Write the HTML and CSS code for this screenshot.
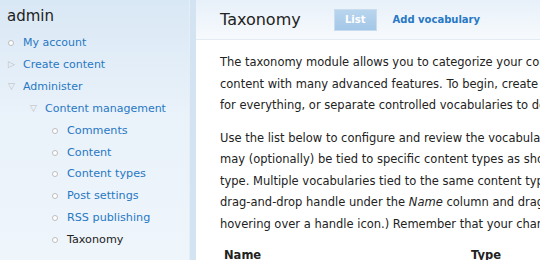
FILE: index.html
```html
<!DOCTYPE html>
<html lang="en">
<head>
  <meta charset="UTF-8">
  <title>Taxonomy | admin</title>
  <link rel="stylesheet" href="styles.css">
</head>
<body>

<div class="page">

  <!-- sidebar navigation -->
  <div class="sidebar">
    <h2>admin</h2>
    <ul class="menu">
      <li class="leaf"><a href="#">My account</a></li>
      <li class="collapsed"><a href="#">Create content</a></li>
      <li class="expanded"><a href="#">Administer</a>
        <ul class="menu">
          <li class="expanded"><a href="#">Content management</a>
            <ul class="menu">
              <li class="leaf"><a href="#">Comments</a></li>
              <li class="leaf"><a href="#">Content</a></li>
              <li class="leaf"><a href="#">Content types</a></li>
              <li class="leaf"><a href="#">Post settings</a></li>
              <li class="leaf"><a href="#">RSS publishing</a></li>
              <li class="leaf"><a href="#" class="active">Taxonomy</a></li>
            </ul>
          </li>
        </ul>
      </li>
    </ul>
  </div>

  <!-- main content -->
  <div class="main">
    <div class="titlebar">
      <h1>Taxonomy</h1>
      <ul class="tabs">
        <li class="on"><a href="#">List</a></li>
        <li><a href="#">Add vocabulary</a></li>
      </ul>
    </div>

    <div class="content">
      <p>The taxonomy module allows you to categorize your content using both tags and administrator defined terms. It is a flexible tool for classifying<br>
      content with many advanced features. To begin, create a 'Vocabulary' to hold one set of terms or tags. You can create one free-tagging vocabulary<br>
      for everything, or separate controlled vocabularies to define the various properties of your content, for example 'Countries' or 'Colors'.</p>

      <p>Use the list below to configure and review the vocabularies defined on your site, or to add a new vocabulary via the Add vocabulary link above. Vocabularies<br>
      may (optionally) be tied to specific content types as shown in the <em>Type</em> column and, if so, will be displayed when creating or editing posts of that<br>
      type. Multiple vocabularies tied to the same content type will be displayed in the order shown below. To change the order of a vocabulary, grab a<br>
      drag-and-drop handle under the <em>Name</em> column and drag it to a new location in the list. (Grab a handle by clicking and holding the mouse while<br>
      hovering over a handle icon.) Remember that your changes will not be saved until you click the <em>Save</em> button at the bottom of the page.</p>

      <table class="vocab">
        <thead>
          <tr><th class="name">Name</th><th>Type</th></tr>
        </thead>
      </table>
    </div>
  </div>

</div>

</body>
</html>
```

FILE: styles.css
```css
body { margin:0; font-family:'DejaVu Sans',Verdana,sans-serif; font-size:11px; color:#222; background:#fff; }
a { color:#2778c4; text-decoration:none; }

.page { display:flex; height:260px; overflow:hidden; }

.sidebar { width:190px; flex:none; background:linear-gradient(#d9e8f5, #eaf2fa 45%, #eef5fb); border-right:6px solid #d3e3f1; box-shadow:inset -1px 0 0 #e4eef7; }
.sidebar h2 { margin:0; padding:7px 0 0 7px; height:25px; font-size:15px; font-weight:normal; color:#222; }
.sidebar ul.menu { list-style:none; margin:0; padding:0 0 0 1px; }
.sidebar ul.menu ul.menu { padding:0; }
.sidebar li { line-height:21.9px; padding-left:22px; position:relative; white-space:nowrap; }
.sidebar li::before { position:absolute; left:6px; top:0; width:9px; text-align:center; color:#bcbcbc; font-size:9px; }
.sidebar li.leaf::before { content:""; left:7px; top:8px; width:4px; height:4px; border:1px solid #bdbdbd; border-radius:50%; background:#fff; }
.sidebar li.collapsed::before { content:"\25B7"; }
.sidebar li.expanded::before { content:"\25BD"; }
.sidebar li a { font-size:11px; }
.sidebar li li li a { font-size:11.2px; }
.sidebar li a.active { color:#222; }

.main { flex:1; min-width:0; overflow:hidden; }
.titlebar { display:flex; align-items:center; height:39px; padding-left:24px; background:linear-gradient(#e7f0f9, #f7fafd); border-bottom:1px solid #e3ebf3; }
.titlebar h1 { margin:0; width:114px; font-size:16px; font-weight:normal; color:#222; }
.tabs { display:flex; align-items:center; gap:16px; list-style:none; margin:0; padding:0; white-space:nowrap; }
.tabs a { display:block; font-weight:bold; font-size:10px; }
.tabs li.on a { color:#fff; background:linear-gradient(#b9d5ee, #a3c7e7); padding:4px 10px 5px; border:1px solid #c9ddef; }

.content { padding:12px 0 0 24px; line-height:21.5px; font-size:11.5px; white-space:nowrap; }
.content p { margin:0 0 11px; }
.vocab { border-collapse:collapse; }
.vocab th { text-align:left; padding:0 0 0 4px; line-height:19px; font-weight:bold; }
.vocab th.name { width:243px; }
```
